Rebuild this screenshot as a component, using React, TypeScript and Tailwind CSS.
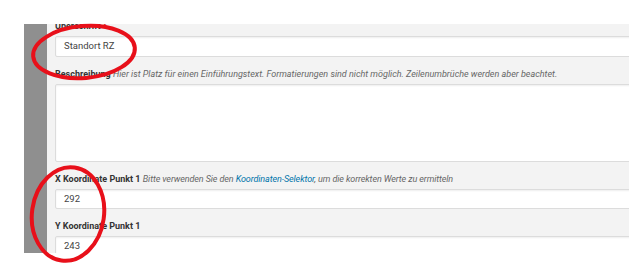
import React from "react";

const font = { fontFamily: "Roboto, 'Noto Sans', Arial, sans-serif" };

function Label({ children }: { children: React.ReactNode }) {
  return (
    <div className="h-[14px] leading-[14px] mb-[3px] text-[9px] whitespace-nowrap text-[#333]">
      {children}
    </div>
  );
}

function Input({ value, h = "h-[20px]" }: { value: string; h?: string }) {
  return (
    <div
      className={`${h} w-[700px] bg-white border border-[#dcdcdc] rounded-[2px] shadow-[inset_0_1px_2px_rgba(0,0,0,0.07)] flex items-center pl-[8px] text-[9.5px] text-[#444]`}
    >
      {value}
    </div>
  );
}

export default function App() {
  return (
    <div className="relative w-[636px] h-[277px] bg-white overflow-hidden" style={font}>
      <div className="ml-[24px] mt-[24px] w-[605px] h-[229px] overflow-hidden flex">
        <div className="w-[23px] shrink-0 bg-[#8f8f8f]" />
        <div className="flex-1 bg-[#f3f3f3] pl-[8px] overflow-hidden">
          <div className="-mt-[5px]">
            <Label>
              <span className="font-bold">Überschrift</span>{" "}
              <span className="text-[#dc3232] font-bold">*</span>
            </Label>
            <Input value="Standort RZ" h="h-[21px]" />
            <div className="h-[10px]" />
            <Label>
              <span className="font-bold">Beschreibung</span>{" "}
              <span className="italic text-[#666]">
                Hier ist Platz für einen Einführungstext. Formatierungen sind nicht möglich. Zeilenumbrüche werden aber beachtet.
              </span>
            </Label>
            <div className="h-[78px] w-[700px] bg-white border border-[#dcdcdc] rounded-[2px] shadow-[inset_0_1px_2px_rgba(0,0,0,0.07)]" />
            <div className="h-[10px]" />
            <Label>
              <span className="font-bold">X Koordinate Punkt 1</span>{" "}
              <span className="italic text-[#666] tracking-[-0.1px]">
                Bitte verwenden Sie den{" "}
                <span className="text-[#0073aa]">Koordinaten-Selektor</span>, um die korrekten Werte zu ermitteln
              </span>
            </Label>
            <Input value="292" />
            <div className="h-[10px]" />
            <Label>
              <span className="font-bold">Y Koordinate Punkt 1</span>
            </Label>
            <Input value="243" />
          </div>
        </div>
      </div>
      <svg
        className="absolute inset-0 pointer-events-none"
        width="636"
        height="277"
        viewBox="0 0 636 277"
      >
        <ellipse
          cx="84"
          cy="52"
          rx="51"
          ry="26"
          transform="rotate(-5 84 52)"
          fill="none"
          stroke="#e8101a"
          strokeWidth="4"
        />
        <ellipse
          cx="68"
          cy="214"
          rx="36"
          ry="47"
          transform="rotate(8 68 214)"
          fill="none"
          stroke="#e8101a"
          strokeWidth="4"
        />
      </svg>
    </div>
  );
}
